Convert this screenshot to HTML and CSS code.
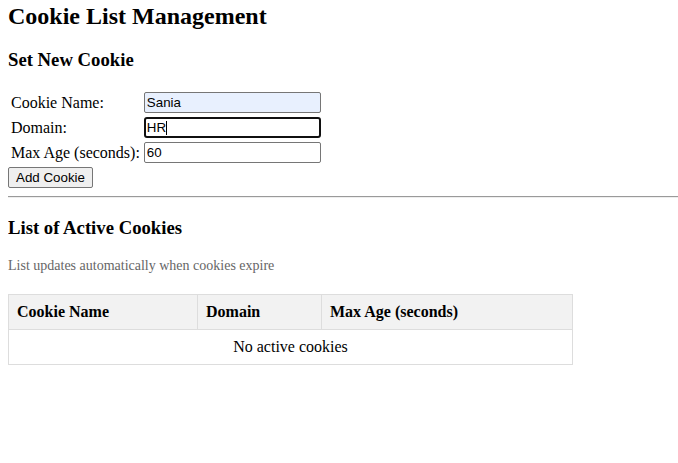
FILE: index.html
```html
<!DOCTYPE html>
<html>
<head>
<meta charset="utf-8">
<link rel="stylesheet" href="styles.css">
</head>
<body>
<h1 class="title">Cookie List Management</h1>
<h3 class="section-title">Set New Cookie</h3>
<table class="form-table">
  <tr><td class="label">Cookie Name:</td><td><input class="field autofilled" type="text" value="Sania"></td></tr>
  <tr><td class="label">Domain:</td><td><span class="focus-wrap"><input class="field focused" type="text" value="HR"><span class="caret"></span></span></td></tr>
  <tr><td class="label">Max Age (seconds):</td><td><input class="field" type="text" value="60"></td></tr>
</table>
<button class="btn" type="button">Add Cookie</button>
<hr class="divider">
<h3 class="section-title">List of Active Cookies</h3>
<p class="note">List updates automatically when cookies expire</p>
<table class="cookie-table">
  <thead>
    <tr><th class="col-name">Cookie Name</th><th class="col-domain">Domain</th><th class="col-age">Max Age (seconds)</th></tr>
  </thead>
  <tbody>
    <tr><td class="empty" colspan="3">No active cookies</td></tr>
  </tbody>
</table>
</body>
</html>
```
FILE: styles.css
```css
html, body {
  background: #fff;
}
body {
  margin: 0 0 8px 8px;
  padding-top: 3px;
  font-family: "Liberation Serif", "Times New Roman", serif;
  font-size: 16px;
  color: #000;
}
.title {
  font-size: 24px;
  font-weight: bold;
  margin: 0 0 16px 0;
}
.section-title {
  font-size: 18.72px;
  font-weight: bold;
  margin: 18.72px 0;
}
.form-table {
  border-spacing: 2px;
  margin-left: 0;
}
.form-table td {
  padding: 1px;
  vertical-align: middle;
}
.label {
  padding-right: 2px;
}
.field {
  box-sizing: border-box;
  width: 177px;
  height: 21px;
  margin: 0;
  padding: 1px 2px;
  border: 1px solid #767676;
  border-radius: 2px;
  font-family: "Liberation Sans", Arial, sans-serif;
  font-size: 13.33px;
  color: #000;
  background: #fff;
  display: block;
}
.autofilled {
  background: #e8f0fe;
}
.focus-wrap {
  position: relative;
  display: block;
}
.focused {
  border: 2px solid #101010;
  border-radius: 3px;
  padding: 0 1px;
  outline: none;
}
.caret {
  position: absolute;
  left: 22px;
  top: 4px;
  width: 1px;
  height: 14px;
  background: #000;
}
.btn {
  display: block;
  box-sizing: border-box;
  width: 85px;
  height: 21px;
  margin: 1px 0 0;
  padding: 1px 6px;
  border: 1px solid #767676;
  border-radius: 2px;
  background: #efefef;
  font-family: "Liberation Sans", Arial, sans-serif;
  font-size: 13.33px;
  color: #000;
}
.divider {
  margin: 8px 0;
  border: 0;
  border-top: 1px solid #9a9a9a;
  border-bottom: 1px solid #eeeeee;
  height: 0;
}
.note {
  font-size: 14px;
  color: #666;
  margin: 18.72px 0 20px;
}
.cookie-table {
  border-collapse: collapse;
}
.cookie-table th,
.cookie-table td {
  border: 1px solid #ddd;
  padding: 8px;
  height: 18px;
  line-height: 18px;
}
.cookie-table th {
  background: #f2f2f2;
  text-align: left;
  font-weight: bold;
}
.col-name { width: 172px; }
.col-domain { width: 107px; }
.col-age { width: 234px; }
.cookie-table .empty {
  text-align: center;
}
```
